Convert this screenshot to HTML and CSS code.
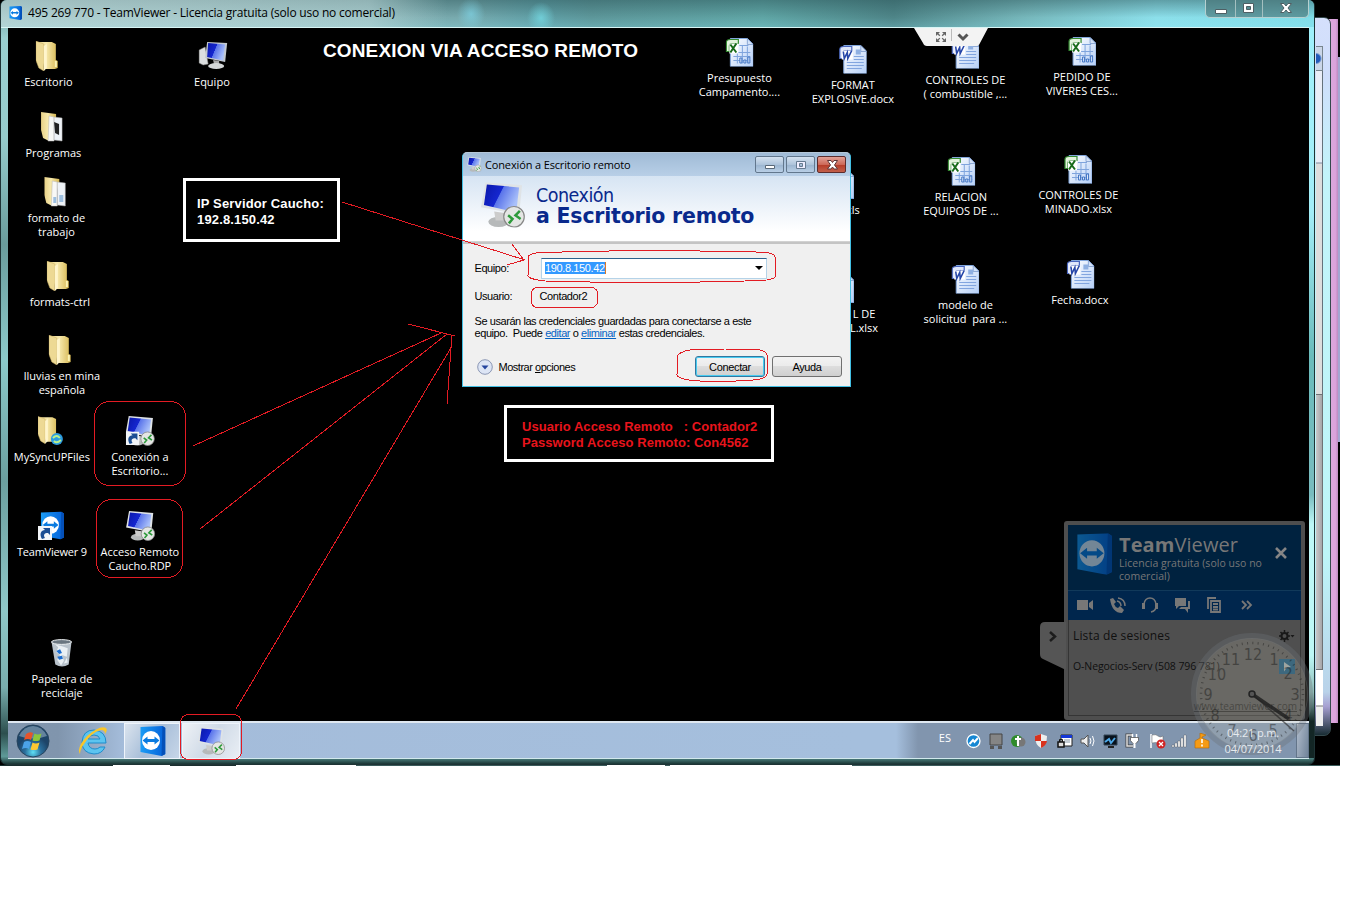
FILE: index.html
```html
<!DOCTYPE html>
<html lang="es">
<head>
<meta charset="utf-8">
<title>495 269 770 - TeamViewer</title>
<link rel="stylesheet" href="styles.css">
</head>
<body>
<svg class="defs" width="0" height="0" aria-hidden="true">
  <defs>
    <linearGradient id="gFolder" x1="0" x2="1"><stop offset="0" stop-color="#e8d187"/><stop offset=".45" stop-color="#f7e9ad"/><stop offset="1" stop-color="#d6b752"/></linearGradient>
    <linearGradient id="gScreen" x1="0" x2="1" y2=".4"><stop offset="0" stop-color="#0a17a8"/><stop offset=".5" stop-color="#1527d0"/><stop offset=".52" stop-color="#5a74ea"/><stop offset="1" stop-color="#a9c0fa"/></linearGradient>
    <linearGradient id="gPage" x2="1" y2="1"><stop offset="0" stop-color="#fff"/><stop offset="1" stop-color="#b5cff7"/></linearGradient>
    <linearGradient id="gTv" x2="1"><stop offset="0" stop-color="#1b9cf5"/><stop offset="1" stop-color="#0560d8"/></linearGradient>
    <radialGradient id="gOrb" cy=".85"><stop offset="0" stop-color="#5ee0f5"/><stop offset=".5" stop-color="#2a6f9c"/><stop offset="1" stop-color="#1d4468"/></radialGradient>
  </defs>
  <symbol id="folder" viewBox="0 0 22 30"><path d="M1 1l15 0 4 2v16l2 1v7l-3 1H9z" fill="url(#gFolder)"/><path d="M0 0l8 3v27l-5-3-3-8z" fill="#edd994" stroke="#c9ae61" stroke-width=".5"/><path d="M8 5l3-2v24l-3 3z" fill="#fff5cc"/><path d="M19 20h2v6h-2z" fill="#fbf2b3"/></symbol>
  <symbol id="folderdoc" viewBox="0 0 22 30"><path d="M0 0l15 2v4L8 29l-6-3-2-8z" fill="url(#gFolder)"/><path d="M8 4l5 1v24H7z" fill="#f8f8f6" stroke="#b9b9b9" stroke-width=".5"/><path d="M13 5l8 1v23l-8-1z" fill="#eef2f7" stroke="#aaa" stroke-width=".5"/></symbol>
  <symbol id="pc" viewBox="0 0 30 28"><path d="M1 8l6-3 3 17-5 1-4-2z" fill="#dcdfe0" stroke="#888" stroke-width=".5"/><path d="M9 0l20 1-2 19-20-4z" fill="#c3c9d0"/><path d="M10 1l17 1.500-2 16L9 15z" fill="url(#gScreen)"/><path d="M15 18l6 1v4h-5z" fill="#aaa"/><ellipse cx="18" cy="24" rx="8" ry="3" fill="#d4d7d8"/></symbol>
  <symbol id="rdp" viewBox="0 0 30 31"><ellipse cx="12" cy="27" rx="7" ry="3.500" fill="#b6b9ba"/><path d="M9 20l7 1v5h-6z" fill="#ccc"/><path d="M3 0l25 2-2 20L0 17z" fill="#dfe3e6"/><path d="M4 1.500l22 2-2 17L2 15.500z" fill="url(#gScreen)"/><circle cx="22.500" cy="23.500" r="7" fill="#e4e6e4" stroke="#888" stroke-width=".8"/><path d="M18.500 22.500l3 2.500-2.500 3M26.500 19.500l-3 3 3.500 2.500" fill="none" stroke="#2d9a3a" stroke-width="1.700"/></symbol>
  <symbol id="tv" viewBox="0 0 26 30"><path d="M1 1l22-1 3 2v26l-4 2-21-4z" fill="url(#gTv)"/><path d="M23 0l3 2v26l-4 2z" fill="#0450b8"/><ellipse cx="11.500" cy="14.500" rx="9" ry="9.500" fill="#fff"/><path d="M3 14.500l5-4v2.500h7v-2.500l5 4-5 4V16H8v2.500z" fill="#0a7be0"/></symbol>
  <symbol id="shortcut" viewBox="0 0 14 14"><path d="M0 0h14v14H0z" fill="#f2f5f8"/><path d="M4 13C1 8 3 4 7 4L5 2h7v7l-2-2C6 7 5 9 7 12z" fill="#1b4e93"/></symbol>
  <symbol id="bin" viewBox="0 0 23 30"><path d="M1 3l21 0-3 24q-7 4-14 0z" fill="#b9c3cc"/><path d="M5 6l3 3-2 5 4 3-3 5 4 6 3-5-2-6 5 2 1-9-6-2zM17 20l-3 6 4-1z" fill="#eaf0f4"/><ellipse cx="11.500" cy="3.500" rx="10.500" ry="2.500" fill="#6a7680" stroke="#f0f3f5"/><path d="M6 13l4-2 2 4-3 1zM7 19l2 3 4-1-1-3z" fill="#1c6ed0"/></symbol>
  <symbol id="page" viewBox="0 0 28 29"><path d="M5 1h17l6 6v22H5z" fill="url(#gPage)" stroke="#83a7dc"/><path d="M22 1v6h6z" fill="#d3e2f8" stroke="#6e8fc5" stroke-width=".7"/></symbol>
  <symbol id="xls" viewBox="0 0 28 29"><use href="#page"/><path d="M8 15h17M8 19h17M8 23h17M12 8v18M17 8v18M22 9v17M14 8h9" stroke="#7fa4dd"/><path d="M14.500 20.500h2v5h-2zM18.500 22.500h2v3h-2zM22.500 19.500h2v6h-2z" fill="#dce8fa" stroke="#4376c4"/><path d="M1 14V5q0-3 4-3h8v4H6q-2 0-2 3v5z" fill="#e3f3dd" stroke="#348a31" stroke-width="1.200"/><path d="M4 6h9v10H4z" fill="#fff"/><path d="M5 7l6 8M11 6l-6 9" stroke="#186b1a" stroke-width="2"/></symbol>
  <symbol id="doc" viewBox="0 0 28 29"><use href="#page"/><path d="M8 18h17M8 21h17M8 24h15M15 12h10M15 15h10" stroke="#82a5df"/><path d="M17 5h5v5h-5z" fill="#8fb0e2"/><path d="M1 14V5q0-3 4-3h8v4H6q-2 0-2 3v5z" fill="#dfe7fb" stroke="#4965bd" stroke-width="1.200"/><path d="M3 6h11v9H3z" fill="#fff"/><path d="M4.500 7l1 7 3-6 .5 6 4-8" fill="none" stroke="#2747a9" stroke-width="1.600"/></symbol>
</svg>

<div class="screen">
  <div class="pinkwin"></div>
  <div class="backwin"><div class="backtop"></div><div class="backpane"></div><div class="thumb"></div><div class="backend"></div></div>
  <div class="sliver"></div>

  <main class="window">
    <header class="titlebar">
      <svg class="appicon" viewBox="0 0 26 30" preserveAspectRatio="none"><use href="#tv"/></svg>
      <span class="wintitle">495 269 770 - TeamViewer - Licencia gratuita (solo uso no comercial)</span>
      <div class="controls">
        <svg viewBox="0 0 104 18"><path d="M29.500 0v17M56.500 0v17" stroke="#a4c0c0"/><g fill="#fff" stroke="#4e5f64"><path d="M9.500 9.500h11v4h-11z"/><path fill-rule="evenodd" d="M37.500 3.500h10v9h-10zM40.500 6.500h4v3h-4z"/><path d="M74.500 3.500h3.500l2 2.500 2-2.500h3.500l-3.500 4.500 3.500 4.500H82l-2-2.500-2 2.500h-3.500l3.500-4.500z"/></g></svg>
      </div>
    </header>

    <section class="desktop">
      <div class="ico i1"><svg class="w22"><use href="#folder"/></svg><span>Escritorio</span></div>
      <div class="ico i2"><svg class="w30"><use href="#pc"/></svg><span>Equipo</span></div>
      <div class="ico i3"><svg class="w22" viewBox="0 0 22 30"><use href="#folderdoc"/><path d="M13 10l5 2v11l-4-2z" fill="#222"/></svg><span>Programas</span></div>
      <div class="ico i4"><svg class="w22" viewBox="0 0 22 30"><use href="#folderdoc"/><path d="M9 20h3v6H9zM15 18h4v7h-4z" fill="#9dbfe0"/></svg><span>formato de
trabajo</span></div>
      <div class="ico i5"><svg class="w22"><use href="#folder"/></svg><span>formats-ctrl</span></div>
      <div class="ico i6"><svg class="w22"><use href="#folder"/></svg><span>lluvias en mina
española</span></div>
      <div class="ico i7"><svg class="w26" viewBox="0 0 26 30"><use href="#folder" width="20" height="28"/><circle cx="19" cy="23" r="6" fill="#2c9ce0"/><path d="M15 22q4-4 7 0M23 24q-4 4-7 1" stroke="#b8f08c" stroke-width="1.800" fill="none"/></svg><span>MySyncUPFiles</span></div>
      <div class="ico i8"><svg class="w30" viewBox="0 0 30 31"><use href="#rdp"/><use href="#shortcut" y="16" width="14" height="14"/></svg><span>Conexión a
Escritorio...</span></div>
      <div class="ico i9"><svg class="w26" viewBox="0 0 26 30"><use href="#tv" x="2" width="24" height="29"/><use href="#shortcut" y="15" width="14" height="14"/></svg><span>TeamViewer 9</span></div>
      <div class="ico i10"><svg class="w30"><use href="#rdp"/></svg><span>Acceso Remoto
Caucho.RDP</span></div>
      <div class="ico i11"><svg class="w22"><use href="#bin"/></svg><span>Papelera de
reciclaje</span></div>
      <div class="ico i12"><svg class="w28"><use href="#xls"/></svg><span>Presupuesto
Campamento....</span></div>
      <div class="ico i13"><svg class="w28"><use href="#doc"/></svg><span>FORMAT
EXPLOSIVE.docx</span></div>
      <div class="ico i14"><svg class="w28"><use href="#doc"/></svg><span>CONTROLES DE
( combustible ,...</span></div>
      <div class="ico i15"><svg class="w28"><use href="#xls"/></svg><span>PEDIDO DE
VIVERES CES...</span></div>
      <div class="ico i16"><svg class="w28"><use href="#xls"/></svg><span>RELACION
EQUIPOS DE ...</span></div>
      <div class="ico i17"><svg class="w28"><use href="#xls"/></svg><span>CONTROLES DE
MINADO.xlsx</span></div>
      <div class="ico i18"><svg class="w28"><use href="#doc"/></svg><span>modelo de
solicitud  para ...</span></div>
      <div class="ico i19"><svg class="w28"><use href="#doc"/></svg><span>Fecha.docx</span></div>
      <div class="ico cut i20"><svg class="w28"><use href="#page"/></svg><span>xls</span></div>
      <div class="ico cut i21"><svg class="w28"><use href="#page"/></svg><span>L DE
L.xlsx</span></div>

      <svg class="dropbar" viewBox="0 0 74 18"><path d="M0 0h74l-8 15q-1 3-4 3H13q-3 0-4-3z" fill="#f3f3f3"/><path d="M37.500 1v12" stroke="#bbb"/><g fill="#666"><path d="M22 4h4l-4 4zM32 4h-4l4 4zM22 14h4l-4-4zM32 14h-4l4-4z"/></g><path d="M23 5l8 8M31 5l-8 8" stroke="#666" stroke-width="1.300" stroke-dasharray="4 3.300"/><path d="M44.500 6.500l4.500 4.500 4.500-4.500" fill="none" stroke="#555" stroke-width="3"/></svg>

      <h1 class="note heading">CONEXION VIA ACCESO REMOTO</h1>
      <div class="note server">IP Servidor Caucho:
192.8.150.42</div>
      <div class="note login">Usuario Acceso Remoto   : Contador2
Password Acceso Remoto: Con4562</div>

      <section class="dialog">
        <header class="dtitle">
          <svg class="dicon" viewBox="0 0 30 31"><use href="#rdp"/></svg><span>Conexión a Escritorio remoto</span>
          <div class="dctl"><svg viewBox="0 0 28 16"><path d="M9.500 8.500h9v3h-9z" fill="#fff" stroke="#596878"/></svg></div>
          <div class="dctl"><svg viewBox="0 0 28 16"><path fill-rule="evenodd" d="M9.500 4.500h9v7h-9zM12.500 6.500h3v3h-3z" fill="#eef" stroke="#667a90"/></svg></div>
          <div class="dctl close"><svg viewBox="0 0 28 16"><path d="M9.500 3.500H13l1.500 2L16 3.500h3.500L16.500 8l3 4H16l-1.500-2L13 12H9.500l3-4z" fill="#fff" stroke="#5c3436"/></svg></div>
        </header>
        <div class="banner"><svg class="bigrdp" viewBox="0 0 30 31"><use href="#rdp"/></svg><div class="btext"><span>Conexión</span><b>a Escritorio remoto</b></div></div>
        <div class="dbody">
          <div class="row r1"><label>Equipo:</label><div class="combo"><span>190.8.150.42</span><i></i></div></div>
          <div class="row r2"><label>Usuario:</label><span>Contador2</span></div>
          <p>Se usarán las credenciales guardadas para conectarse a este<br>equipo.&nbsp; Puede <a>editar</a> o <a>eliminar</a> estas credenciales.</p>
          <div class="row r3"><svg viewBox="0 0 16 16"><circle cx="8" cy="8" r="7.300" fill="#dde5f5" stroke="#8b97b4"/><path d="M4.500 6.500h7L8 10.500z" fill="#24449d"/></svg><span class="opts">Mostrar <u>o</u>pciones</span><button class="primary">Conectar</button><button>Ayuda</button></div>
        </div>
      </section>

      <aside class="panel">
        <svg class="tab" viewBox="0 0 26 48"><path d="M26 0H5Q0 0 0 5v27q0 4 3 5l23 11z" fill="#555"/><path d="M10 10l5 4.500-5 4.500" fill="none" stroke="#1c1c1c" stroke-width="2.500"/></svg>
        <div class="phead"><svg class="plogo" viewBox="0 0 26 30"><use href="#tv"/></svg><div class="ptext"><div class="brand"><b>Team</b>Viewer</div><div class="lic">Licencia gratuita (solo uso no<br>comercial)</div></div><svg class="px" viewBox="0 0 12 12"><path d="M1 1l10 10M11 1L1 11" stroke="#858585" stroke-width="2.600"/></svg></div>
        <div class="ptools"><svg viewBox="0 0 180 18"><g fill="#777"><path d="M0 4h11v10H0zM12 7l4-3v10l-4-3z"/><path d="M33 3l3-1 3 4-2 2q1 3 4 4l2-2 4 4-2 3q-10 0-12-14z"/><path d="M98 2h11v8h-7l-3 3v-3h-1zM111 5h2v8h-2v4l-3-4h-6l2-2h7z"/></g><path d="M40 5q4 1 4 5M41 2q7 1 7 8M67 10V8q1-6 6-6t6 6v2q0 5-5 6" fill="none" stroke="#777" stroke-width="1.500"/><path d="M65 7h3v6h-3zM78 7h3v6h-3z" fill="#777"/><path d="M131 13V2h8M134 5h9v11h-9zM136 8h5M136 11h5M136 13.500h5M165 5l4 4-4 4M170 5l4 4-4 4" fill="none" stroke="#777" stroke-width="1.800"/></svg></div>
        <div class="plist"><div class="ltitle"><span>Lista de sesiones</span><svg viewBox="0 0 16 12"><circle cx="5.500" cy="6" r="3" fill="none" stroke="#191919" stroke-width="2"/><path d="M5.500 0v2.500M5.500 9.500V12M0 6h2M9 6h2M1.500 2l2 2M9.500 10l-2-2M9.500 2l-2 2M1.500 10l2-2" stroke="#191919" stroke-width="1.500"/><path d="M11.500 5h4l-2 2.500z" fill="#191919"/></svg></div><div class="sess"><span>O-Negocios-Serv (508 796 781)</span><svg viewBox="0 0 16 15"><path d="M0 0h16v15H0z" fill="#164f70"/><path d="M5 3l7 5-4 .500-3 4z" fill="#929b9b"/></svg></div><div class="site">www.teamviewer.com</div></div>
      </aside>
    </section>

    <footer class="taskbar">
      <svg class="orb" viewBox="0 0 34 34"><circle cx="17" cy="17" r="16" fill="url(#gOrb)" stroke="#28455e"/><path d="M3 12Q8 2 17 2t14 10q-14 5-28 0z" fill="#cfe3ee" opacity=".4"/><path d="M10 10q4-3 7-1l-2 7q-3-2-7 0z" fill="#e8542a"/><path d="M18.500 9.500q3 2 7 0l-2 7q-4 1-7 0z" fill="#8cc63c"/><path d="M8 18q3-2 7 0l-2 7q-3-2-7 0z" fill="#4ba3e8"/><path d="M16.500 18.500q3 2 7 0l-2 7q-4 1-7 0z" fill="#fcc832"/></svg>
      <svg class="ie" viewBox="0 0 30 30"><path fill-rule="evenodd" d="M28 17H10q1 6 7 6 3 0 5-2h5q-3 7-11 7Q4 27 4 16 5 4 16 4q12 1 12 13zM10 13h12q-1-4-6-4t-6 4z" fill="#5cc4f0" stroke="#1f8ccb" stroke-width="1"/><path d="M2 28Q-2 22 9 10 22-1 28 2q2 2-1 6 0-4-4-4Q13 6 4 21q-2 4-2 7z" fill="#f8c62c"/></svg>
      <div class="task tv"><svg viewBox="0 0 26 30"><use href="#tv"/></svg></div>
      <div class="task rd"><svg viewBox="0 0 30 31"><use href="#rdp"/></svg></div>
      <div class="tray">
        <span class="lang">ES</span>
        <svg class="tricons" viewBox="0 0 244 16">
          <circle cx="7.500" cy="8" r="6.500" fill="#1587d3" stroke="#fff" stroke-width="1.300"/><path d="M3.500 11l3.500-4 1.500 2 3.500-4" stroke="#fff" stroke-width="2" fill="none"/>
          <path d="M24 1h12v11H24z" fill="#858585" stroke="#444"/><path d="M24 13h4v3h-4zM32 13h4v3h-4z" fill="#555"/>
          <circle cx="51" cy="8" r="6" fill="#2f8c2b"/><circle cx="55" cy="9" r="4.500" fill="#777"/><path d="M52 3v10M49 6h6" stroke="#fff" stroke-width="2"/>
          <path d="M69 3l6-2 6 2q0 9-6 12-6-3-6-12z" fill="#eee"/><path d="M69 3l6-2v7h6q-1 5-6 7V8h-6z" fill="#d8321e"/>
          <path d="M95 2h11v11H95z" fill="#fff" stroke="#222"/><path d="M95 2h11v3H95z" fill="#1438d8"/><path d="M98 7h6M98 9h6" stroke="#89a"/><path d="M92 9h6v5h-6z" fill="#ddd" stroke="#111" stroke-width="1.500"/><path d="M93.500 9V6.500h3V9" fill="none" stroke="#111"/>
          <path d="M115 6h3l4-4v12l-4-4h-3z" fill="#eee" stroke="#555"/><path d="M124 5q2 3 0 6M126.500 3q3 5 0 10" fill="none" stroke="#fff"/>
          <path d="M138 2h13v10h-13z" fill="#07111c" stroke="#345"/><path d="M139 9l4-3 2 4 4-5" fill="none" stroke="#4ca7e6" stroke-width="2"/><path d="M142 13h6v2h-6z" fill="#222"/>
          <path d="M166 2h-5v11h6" fill="none" stroke="#444" stroke-width="3"/><path d="M166 2h-5v11h6" fill="none" stroke="#ddd" stroke-width="1.500"/><path d="M166.500 1v4M170.500 1v4" stroke="#fff" stroke-width="1.500"/><path d="M164.500 4.500h8v3l-2.500 3h-3l-2.500-3z" fill="#fff" stroke="#444" stroke-width=".7"/><path d="M168.500 10v5" stroke="#fff" stroke-width="2"/>
          <path d="M185 1v14" stroke="#fff" stroke-width="1.500"/><path d="M186 2q4-1 6 1t5 0v7q-3 1-5 0t-6 0z" fill="#fff" stroke="#666" stroke-width=".5"/><circle cx="195" cy="11" r="4.500" fill="#d02424"/><path d="M193 9l4 4M197 9l-4 4" stroke="#fff" stroke-width="1.300"/>
          <path d="M206 12h2v2h-2zM209 10h2v4h-2zM212 8h2v6h-2zM215 5h2v9h-2zM218 2h2v12h-2z" fill="#fff" stroke="#555" stroke-width=".4"/>
          <path d="M229 8l5-3V0l6 2-4 2v1l7 3v7h-14z" fill="#f59b16" stroke="#b66a00" stroke-width=".6"/><path d="M236 6v4M236 11.500v2" stroke="#fff" stroke-width="1.600"/>
        </svg>
        <div class="clocktext">04:21 p.m.<br>04/07/2014</div>
      </div>
      <div class="peek"></div>
    </footer>
  </main>

  <svg class="clock" viewBox="0 0 124 124">
    <circle cx="62" cy="62" r="56" fill="#c7c5b2" opacity=".22"/><circle cx="62" cy="62" r="58" fill="none" stroke="#6c7276" stroke-width="6" opacity=".36"/>
    <circle cx="62" cy="62" r="51" fill="none" stroke="#111" stroke-width="2.500" stroke-dasharray="1 4.340" opacity=".4"/>
    <g class="nums"><text x="63" y="28">12</text><text x="84" y="33">1</text><text x="98" y="47">2</text><text x="105" y="68">3</text><text x="98" y="89">4</text><text x="83" y="104">5</text><text x="63" y="109">6</text><text x="42" y="104">7</text><text x="25" y="89">8</text><text x="18" y="68">9</text><text x="27" y="48">10</text><text x="41" y="33">11</text></g>
    <path d="M62 62l37 25" stroke="#222" stroke-width="3.500" opacity=".85"/><path d="M62 62l42 37" stroke="#222" stroke-width="1.500" opacity=".6"/><circle cx="62" cy="62" r="3" fill="#555" stroke="#222" stroke-width="1.500"/>
  </svg>

  <svg class="marks" viewBox="0 0 1340 766">
    <path d="M342 202L525 260M512 244l12 16-17 5M193 446L441 333M200 529L447 334M236 709L452 346M408 324l47 12M452 335l-5 69"/>
    <rect x="94.500" y="401.500" width="91" height="84" rx="15"/><rect x="96.500" y="499.500" width="86" height="78" rx="15"/><rect x="180.500" y="714.500" width="61" height="45" rx="8"/>
    <path d="M536 253q90-4 220-1 19 0 19 5v20q-2 4-30 4-100 3-200 0-18-2-17-6v-18q1-3 8-4z"/><rect x="531.500" y="287.500" width="66" height="20" rx="6"/><path d="M690 350q35-2 70 0 7 2 7 5v19q-1 5-14 6-40 3-64 0-13-2-12-6v-17q1-5 13-7z"/>
  </svg>
  <div class="strip"></div>
</div>
</body>
</html>
```
FILE: styles.css
```css
* { box-sizing: border-box; }
body { margin: 0; background: #fff; font-family: "Open Sans", "Noto Sans", sans-serif; }
.defs { position: absolute; }
.screen { position: relative; width: 1340px; height: 766px; background: #000; overflow: hidden; }

/* windows partly hidden behind the main one */
.pinkwin { position: absolute; left: 1325px; top: 19px; width: 13px; height: 704px; background: linear-gradient(90deg, #a97baa, #dba8dc 40%, #dba3dc 80%, #bd8ac0); }
.sliver { position: absolute; left: 1338px; top: 57px; width: 2px; height: 385px; background: #a5a6d2; }
.backwin { position: absolute; left: 1300px; top: 17px; width: 31px; height: 719px; padding: 28px 7px 9px 15px; border: 1px solid #35494d; border-radius: 0 7px 7px 0; display: flex; flex-direction: column; background: linear-gradient(#d5e0fc, #cfdefb 8%, #c2f4fa 22%, #bdf5f8 75%, #b9d2e9 94%, #a7a0d2 96%, #182c33); }
.backtop { height: 25px; background: radial-gradient(circle at 0 50%, #235bb9 4px, #cbd6e8 6px); border: 1px solid #78858e; border-left: 0; }
.backpane { height: 323px; background: linear-gradient(#e9edf7 91px, #7e8ca0 92px, #ddd 93px); border-right: 1px solid #65727b; }
.thumb { height: 276px; background: linear-gradient(90deg, #c8c8ca, #a6a6a9); border: 1px solid #6f7275; border-left: 0; }
.backend { flex: 1; background: linear-gradient(#fff 35px, #777 36px, #eee 37px); }

.window { position: absolute; left: 0; top: 0; width: 1315px; height: 765px; padding: 0 7px 5px; display: flex; flex-direction: column; border: 1px solid #1e3335; border-top: 0; border-radius: 6px 6px 7px 7px; background: linear-gradient(#6a9999, #9ad0d0 5%, #96cccc 18%, #6a9c9c 32%, #8ccaca 47%, #6b9f9f 63%, #8fc8c8 80%, #79adad 90%, #2c4f4e 96%, #5e9a98 99%, #1a3534); }
.window::after { content: ""; position: absolute; right: 0; top: 27px; width: 5px; bottom: 6px; background: linear-gradient(#9ff0fb, #a3eef8 25%, #6bbcbc 45%, #79bcbf 64%, #bdf8f7 68%, #bdf7f5 86%, #8fbdb9 91%, #132625 95%); }
.titlebar { height: 28px; margin: 0 -7px; padding: 0 5px 0 8px; display: flex; align-items: flex-start; border-bottom: 1px solid #d8f5f5; background: radial-gradient(ellipse 14px 16px at 470px 14px, rgba(130,220,240,.6), transparent), radial-gradient(ellipse 14px 16px at 540px 18px, rgba(120,225,235,.7), transparent), linear-gradient(90deg, rgba(214,235,235,.6), rgba(205,228,228,.5) 28%, rgba(100,150,155,0) 34%), linear-gradient(180deg, rgba(40,80,84,.45), rgba(255,255,255,0) 65%, rgba(150,240,255,.2)), linear-gradient(90deg, #75a5a8, #78aaae 35%, #5f9fa6 41%, #5d979a 45%, #5fa5a5 58%, #4e8588 68%, #76b7bb 78%, #8cdfea 88%, #80dce8); border-radius: 6px 6px 0 0; }
.appicon { width: 13px; height: 14px; margin-top: 6px; }
.wintitle { flex: 1; margin-left: 6px; font-size: 12px; line-height: 26px; letter-spacing: -.2px; color: #000; white-space: nowrap; }
.controls { width: 104px; height: 18px; border: 1px solid #b5d0d0; border-top: 0; border-radius: 0 0 5px 5px; background: rgba(70,110,112,.6); }
.controls svg { display: block; width: 104px; height: 18px; }
.desktop { position: relative; flex: 1; background: #000; width: 1301px; margin-left: 0; }

/* free canvas of desktop icons: --x is the label centre, --d the icon shift */
.ico { position: absolute; left: calc(var(--x) * 1px - 8.100px); top: calc(var(--y) * 1px - 28.500px); transform: translateX(-50%); display: flex; flex-direction: column; align-items: center; gap: 4px; color: #fff; font-size: 11px; line-height: 14.300px; text-align: center; white-space: pre; }
.ico svg { display: block; height: 30px; position: relative; left: calc(var(--d, 0) * 1px); }
.w22 { width: 22px; } .w26 { width: 26px; } .w28 { width: 28px; } .w30 { width: 30px; }
.i1 { --x: 48.500; --y: 41; --d: -2; } .i2 { --x: 212; --y: 41; --d: 1; } .i3 { --x: 53.500; --y: 112; --d: -1; }
.i4 { --x: 56.500; --y: 177; --d: -1; } .i5 { --x: 60; --y: 261; --d: -2; } .i6 { --x: 62; --y: 335; --d: -2; }
.i7 { --x: 52; --y: 416; --d: -1; } .i8 { --x: 140; --y: 416; } .i9 { --x: 52; --y: 511; --d: -1; }
.i9 span { letter-spacing: -.2px; }
.i10 { --x: 140; --y: 511; --d: 1; } .i11 { --x: 62; --y: 638; } .i12 { --x: 739.500; --y: 37; }
.i13 { --x: 853; --y: 44; } .i14 { --x: 965.500; --y: 39; } .i15 { --x: 1082; --y: 36; }
.i16 { --x: 961; --y: 156; } .i17 { --x: 1078.500; --y: 154; } .i18 { --x: 965.500; --y: 264; } .i19 { --x: 1080; --y: 259; }
.cut { transform: none; align-items: flex-start; } .cut svg { left: -20px; }
.i20 { --x: 846; --y: 169; } .i21 { --x: 850; --y: 273; } .i21 svg { left: -24px; }
.dropbar { position: absolute; left: 906px; top: 0; width: 74px; height: 18px; }

.note { position: absolute; margin: 0; font: bold 13px/16px "Liberation Sans", Arial, sans-serif; letter-spacing: .15px; color: #fff; white-space: pre; }
.heading { left: 315px; top: 11px; font-size: 19px; line-height: 24px; letter-spacing: .13px; }
.server { left: 175px; top: 150px; width: 157px; height: 64px; border: 3px solid #fff; padding: 15px 11px; }
.login { left: 496px; top: 377px; width: 270px; height: 57px; border: 3px solid #fff; padding: 11px 15px; letter-spacing: .05px; color: #e8141c; }

.dialog { position: absolute; left: 454px; top: 124px; width: 389px; height: 235px; display: flex; flex-direction: column; border: 1px solid #43bfe3; border-top-color: #b5c7d8; border-radius: 5px 5px 0 0; background: #f0f0f0; color: #000; font: 11px/12px "Liberation Sans", Arial, sans-serif; letter-spacing: -.43px; overflow: hidden; }
.dtitle { height: 23px; display: flex; align-items: center; padding: 0 4px 0 4px; gap: 2px; background: linear-gradient(#a0bbd6, #b8cfe7); font: 11px "Open Sans", sans-serif; letter-spacing: -.14px; }
.dtitle > span { flex: 1; padding-left: 1px; } .dicon { width: 15px; height: 15px; }
.dctl { width: 29px; height: 17px; border: 1px solid #62778d; border-radius: 2px; background: linear-gradient(#d5e2f0, #aec4db 50%, #9ab4cf 51%, #b9cfe6); }
.dctl svg { display: block; width: 28px; height: 16px; }
.dctl.close { border-color: #5c2c2c; background: linear-gradient(#e2a196, #cd6959 50%, #b53a27 51%, #c2604b); }
.banner { height: 66px; display: flex; padding: 6px 0 0 18px; gap: 11px; background: linear-gradient(#d6e4f3, #fff 85%); border-bottom: 1px solid #d2d2d2; color: #09298c; font: 19.500px/21px "DejaVu Sans Condensed", sans-serif; letter-spacing: -.5px; }
.bigrdp { width: 44px; height: 46px; } .btext { display: flex; flex-direction: column; padding-top: 3px; }
.btext b { font: bold 20.500px/21px "DejaVu Sans", sans-serif; letter-spacing: -.2px; white-space: nowrap; }
.dbody { flex: 1; padding: 14px 8px 0 11.500px; border-top: 2px solid #c4c4c4; }
.row { display: flex; align-items: center; } .row label { width: 66.500px; }
.r1 { height: 20px; } .r2 { height: 12px; margin-top: 12px; } .r2 label { width: 65px; } .r2 span { letter-spacing: -.4px; }
.combo { width: 226px; height: 21px; background: #fff; border: 1px solid #b5d3e8; border-top-color: #2c628d; display: flex; align-items: center; justify-content: space-between; padding: 0 3px; }
.combo span { background: #3399ff; color: #fff; border-right: 1px solid #d77a29; letter-spacing: -.38px; }
.combo i { border: 4px solid transparent; border-top-color: #000; border-bottom: 0; }
.dbody p { margin: 13px 0 0; white-space: nowrap; } .dbody a { color: #0563c4; text-decoration: underline; }
.r3 { margin-top: 17px; } .r3 svg { width: 16px; height: 16px; margin-left: 2px; } .opts { flex: 1; padding-left: 6px; letter-spacing: -.48px; }
.row button { width: 70px; height: 21px; padding: 0; margin-left: 7px; border: 1px solid #707070; border-radius: 3px; background: linear-gradient(#f3f3f3, #ebebeb 49%, #dddddd 50%, #cfcfcf); font: 11px "Liberation Sans", Arial, sans-serif; letter-spacing: -.35px; color: #000; }
.row button.primary { border-color: #3277a0; box-shadow: inset 0 0 0 1px #48cbf0; }

.panel { position: absolute; left: 1056px; top: 493px; width: 241px; height: 199px; border: 4px solid #4e4e4e; border-radius: 3px; background: #4f4f4f; display: flex; flex-direction: column; color: #777; }
.tab { position: absolute; left: -28px; top: 97px; width: 26px; height: 48px; }
.phead { height: 66px; display: flex; background: #00223f; border-bottom: 1px solid #11395a; padding: 8px 14px 0 8px; }
.plogo { width: 36px; height: 42px; opacity: .45; } .ptext { flex: 1; padding-left: 7px; white-space: nowrap; }
.brand { font-size: 20px; line-height: 23px; letter-spacing: .08px; } .lic { font-size: 10.500px; line-height: 12.500px; margin-top: 1px; letter-spacing: .03px; }
.px { width: 12px; height: 12px; margin-top: 14px; margin-left: -20px; }
.ptools { height: 29px; background: #00264d; padding: 5px 9px; } .ptools svg { width: 180px; height: 18px; display: block; }
.plist { flex: 1; border: 1px solid #353535; border-top: 0; color: #101010; padding: 8px 5px 0 4px; white-space: nowrap; }
.ltitle { display: flex; justify-content: space-between; align-items: center; font-size: 12px; line-height: 16px; letter-spacing: .15px; } .ltitle svg { width: 16px; height: 12px; }
.sess { display: flex; justify-content: space-between; align-items: center; margin-top: 14px; font-size: 10.500px; line-height: 16px; letter-spacing: -.1px; } .sess svg { width: 16px; height: 15px; }
.site { text-align: right; text-decoration: underline; font-size: 10px; line-height: 14px; margin-top: 25px; margin-right: -2px; color: #252525; }

.taskbar { height: 38px; width: 1301px; display: flex; align-items: center; border-top: 2px solid #dfe8f1; border-bottom: 1px solid #d2e9ed; background: linear-gradient(90deg, #8196ae, #8095ad 50px, #a4bcda 115px, #a5bfdd 850px, #a5bfdd 888px, #8195ae 910px); }
.orb { width: 34px; height: 34px; margin-left: 8px; } .ie { width: 30px; height: 30px; margin-left: 28px; }
.task { height: 36px; display: flex; align-items: center; justify-content: center; border: 1px solid #eef4fb; background: linear-gradient(120deg, #dbe4ee, #a6bdd8 50%, #c7d6e8); }
.task svg { width: 27px; height: 30px; } .task.tv { width: 56px; margin-left: 16px; } .task.rd { width: 58px; margin-left: 2px; background: linear-gradient(120deg, #eff2f6, #cfdae7 50%, #e9eef4); }
.tray { flex: 1; display: flex; align-items: center; justify-content: flex-end; color: #fff; font-size: 11px; line-height: 16px; }
.lang { margin: -5px 15px 0 0; } .tricons { width: 244px; height: 16px; }
/* the time stays above the translucent clock gadget */
.clocktext { position: relative; z-index: 2; width: 62px; margin: 0 12px 0 12px; text-align: center; white-space: nowrap; color: #e6eaee; letter-spacing: -.15px; }
.peek { width: 13px; height: 35px; border: 1px solid #63758a; background: linear-gradient(100deg, #b0bccb, #71849a); }
.clock { position: absolute; left: 1190px; top: 632px; width: 124px; height: 124px; z-index: 1; }
.nums { font: 16px "DejaVu Sans Condensed", sans-serif; text-anchor: middle; fill: #111; opacity: .42; }
.marks { position: absolute; left: 0; top: 0; width: 1340px; height: 766px; fill: none; stroke: #e31b23; stroke-width: 1; shape-rendering: crispEdges; z-index: 3; }
.strip { position: absolute; left: 0; top: 765px; width: 1340px; height: 1px; background: linear-gradient(90deg, #1a2f2f 113px, #fff 113px 170px, #1a2f2f 170px 236px, #fff 236px 356px, #3a5b5b 356px 607px, #fff 607px 665px, #3a5b5b 665px 670px, #fff 670px 852px, #3a5b5b 852px); }
```
